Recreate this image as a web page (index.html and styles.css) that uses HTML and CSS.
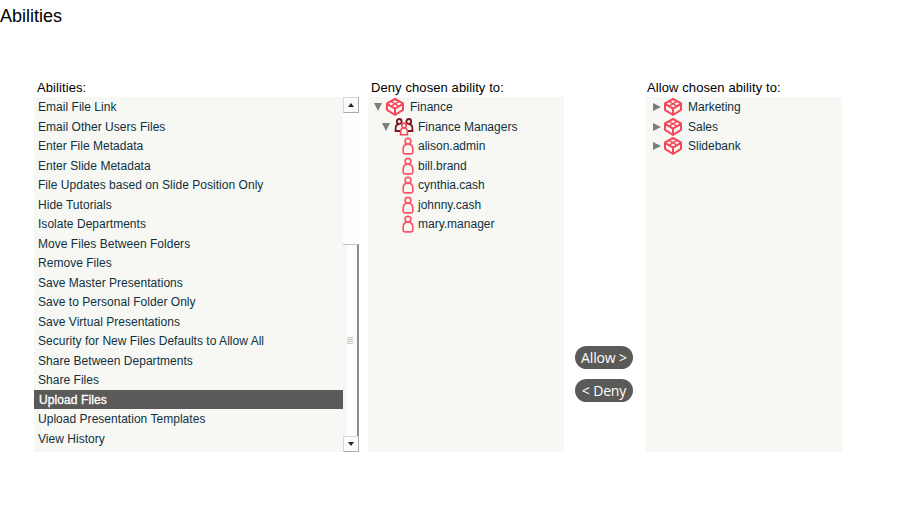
FILE: index.html
```html
<!DOCTYPE html>
<html lang="en">
<head>
  <meta charset="UTF-8">
  <title>Abilities</title>
  <link rel="stylesheet" href="styles.css">
</head>
<body>
  <svg class="defs" width="0" height="0">
    <symbol id="i-org" viewBox="0 0 18 18">
      <path d="M9 1 17 5.4V11.8L9 17 1 11.8V5.4Z M1 5.8 9 10.6 17 5.8 M9 10.6V17" fill="none" stroke="currentColor" stroke-width="2" stroke-linejoin="round"/>
      <path d="M5.4 3.6 12.4 7.9 M12.6 3.6 5.6 7.9" fill="none" stroke="currentColor" stroke-width="1.5"/>
    </symbol>
    <symbol id="i-user" viewBox="0 0 12 18">
      <circle cx="6" cy="4.2" r="2.9" fill="none" stroke="currentColor" stroke-width="1.7"/>
      <path d="M6 7.2C2.6 7.2 1.2 9.4 1.2 12V15.2Q1.2 16.8 2.8 16.8H9.2Q10.8 16.8 10.8 15.2V12C10.8 9.4 9.4 7.2 6 7.2Z" fill="none" stroke="currentColor" stroke-width="1.7"/>
    </symbol>
    <symbol id="i-group" viewBox="0 0 20 18">
      <g fill="none" stroke="#7d1420" stroke-width="1.8">
        <circle cx="5.2" cy="3.4" r="2.4"/>
        <circle cx="14.8" cy="3.4" r="2.4"/>
        <path d="M5.2 6.2C2.6 6.2 1.6 8.2 1.6 10.6V13H6M14.8 6.2C17.4 6.2 18.4 8.2 18.4 10.6V13H14"/>
      </g>
      <g fill="#f7f8f3" stroke="#f4485a" stroke-width="1.6">
        <circle cx="10" cy="7.4" r="2.3"/>
        <path d="M10 10C7.6 10 6.6 11.8 6.6 14V16.8H13.4V14C13.4 11.8 12.4 10 10 10Z"/>
      </g>
    </symbol>
  </svg>

  <h1 class="page-title">Abilities</h1>

  <div class="panels">
    <div class="panel panel-list">
      <div class="panel-label">Abilities:</div>
      <div class="list-box">
        <ul class="ability-list">
          <li>Email File Link</li>
          <li>Email Other Users Files</li>
          <li>Enter File Metadata</li>
          <li>Enter Slide Metadata</li>
          <li>File Updates based on Slide Position Only</li>
          <li>Hide Tutorials</li>
          <li>Isolate Departments</li>
          <li>Move Files Between Folders</li>
          <li>Remove Files</li>
          <li>Save Master Presentations</li>
          <li>Save to Personal Folder Only</li>
          <li>Save Virtual Presentations</li>
          <li>Security for New Files Defaults to Allow All</li>
          <li>Share Between Departments</li>
          <li>Share Files</li>
          <li class="selected">Upload Files</li>
          <li>Upload Presentation Templates</li>
          <li>View History</li>
        </ul>
        <div class="scrollbar">
          <div class="scroll-btn"><span class="arrow-up"></span></div>
          <div class="scroll-track">
            <div class="scroll-thumb"><span class="grip"></span></div>
          </div>
          <div class="scroll-btn"><span class="arrow-down"></span></div>
        </div>
      </div>
    </div>

    <div class="panel panel-tree">
      <div class="panel-label">Deny chosen ability to:</div>
      <ul class="tree">
        <li class="level-0"><span class="tw-open"></span><svg class="ico-org"><use href="#i-org"/></svg>Finance</li>
        <li class="level-1"><span class="tw-open"></span><svg class="ico-group"><use href="#i-group"/></svg>Finance Managers</li>
        <li class="level-2"><svg class="ico-user"><use href="#i-user"/></svg>alison.admin</li>
        <li class="level-2"><svg class="ico-user"><use href="#i-user"/></svg>bill.brand</li>
        <li class="level-2"><svg class="ico-user"><use href="#i-user"/></svg>cynthia.cash</li>
        <li class="level-2"><svg class="ico-user"><use href="#i-user"/></svg>johnny.cash</li>
        <li class="level-2"><svg class="ico-user"><use href="#i-user"/></svg>mary.manager</li>
      </ul>
    </div>

    <div class="actions">
      <button class="pill">Allow &gt;</button>
      <button class="pill">&lt; Deny</button>
    </div>

    <div class="panel panel-tree panel-allow">
      <div class="panel-label">Allow chosen ability to:</div>
      <ul class="tree">
        <li class="level-0"><span class="tw-closed"></span><svg class="ico-org"><use href="#i-org"/></svg>Marketing</li>
        <li class="level-0"><span class="tw-closed"></span><svg class="ico-org"><use href="#i-org"/></svg>Sales</li>
        <li class="level-0"><span class="tw-closed"></span><svg class="ico-org"><use href="#i-org"/></svg>Slidebank</li>
      </ul>
    </div>
  </div>
</body>
</html>
```

FILE: styles.css
```css
body {
  margin: 0;
  background-color: #fff;
  color: #000;
  font-family: "Liberation Sans", Arial, sans-serif;
}
.defs {
  display: block;
  height: 0;
}
.page-title {
  margin: 0;
  height: 32px;
  font-size: 18px;
  font-weight: normal;
  line-height: 32px;
}
.panels {
  display: flex;
  margin-top: 47px;
  padding-left: 34px;
}
.panel-label {
  height: 18px;
  padding-left: 3px;
  font-size: 13px;
  letter-spacing: 0.09px;
  line-height: 18px;
}
.panel-allow .panel-label {
  padding-left: 1px;
}
.panel-list {
  width: 325px;
  margin-right: 9px;
}
.panel-tree {
  width: 196px;
}
.list-box {
  display: flex;
  height: 355px;
  background-color: #f7f8f3;
}
.ability-list {
  flex: 1;
  margin: 0;
  padding: 0;
  list-style: none;
}
.ability-list li {
  box-sizing: border-box;
  height: 19.5px;
  padding-top: 1px;
  padding-left: 4px;
  color: #0f3040;
  font-size: 12px;
  letter-spacing: 0.03px;
  line-height: 19px;
}
.ability-list li.selected {
  padding-left: 5px;
  background-color: #5a5a58;
  color: #fff;
  letter-spacing: 0.1px;
  -webkit-text-stroke: 0.35px #fff;
}
.scrollbar {
  display: flex;
  flex-direction: column;
  width: 16px;
  background-color: #fff;
}
.scroll-btn {
  display: flex;
  align-items: center;
  justify-content: center;
  height: 16px;
  border: 1px solid #d8d8d8;
  border-right-color: #a8a8a8;
  border-bottom-color: #a8a8a8;
  box-sizing: border-box;
  background-color: #fafafa;
}
.arrow-up {
  border-left: 3.5px solid transparent;
  border-right: 3.5px solid transparent;
  border-bottom: 4px solid #222;
}
.arrow-down {
  border-left: 3.5px solid transparent;
  border-right: 3.5px solid transparent;
  border-top: 4px solid #222;
}
.scroll-track {
  display: flex;
  flex: 1;
  flex-direction: column;
  justify-content: flex-end;
  background-color: #fdfdfd;
}
.scroll-thumb {
  display: flex;
  align-items: center;
  justify-content: center;
  height: 192px;
  border-top: 1px solid #c4c4c4;
  border-right: 2px solid #8c8c8c;
  box-sizing: border-box;
  background: linear-gradient(to right, #f2f2f2, #fff 40%, #f8f8f8);
}
.grip {
  width: 6px;
  height: 7px;
  background: repeating-linear-gradient(to bottom, #c9cfcb 0, #c9cfcb 1px, #eef0ee 1px, #eef0ee 2px);
}
.tree {
  box-sizing: border-box;
  height: 355px;
  margin: 0;
  padding: 0.5px 0 0;
  background-color: #f7f8f3;
  list-style: none;
}
.tree li {
  display: flex;
  align-items: center;
  height: 19.5px;
  color: #0f3040;
  font-size: 12px;
}
.tree .level-0 {
  padding-left: 6px;
}
.tree .level-1 {
  padding-left: 14px;
}
.tree .level-2 {
  padding-left: 34px;
}
.tw-open {
  margin-right: 4px;
  border-left: 4.5px solid transparent;
  border-right: 4.5px solid transparent;
  border-top: 8px solid #7b7f7b;
}
.tw-closed {
  margin-right: 3px;
  margin-left: 1px;
  border-top: 4.5px solid transparent;
  border-bottom: 4.5px solid transparent;
  border-left: 8px solid #7b7f7b;
}
.ico-org {
  width: 18px;
  height: 18px;
  margin-right: 6px;
  color: #f6475a;
}
.ico-group {
  width: 20px;
  height: 18px;
  margin-right: 4px;
}
.ico-user {
  width: 12px;
  height: 18px;
  margin-right: 4px;
  color: #f9566a;
}
.actions {
  display: flex;
  flex-direction: column;
  justify-content: flex-end;
  gap: 10px;
  width: 58px;
  margin: 0 13px 50px 11px;
}
.pill {
  width: 58px;
  height: 23px;
  padding: 0;
  border: none;
  border-radius: 12px;
  background-color: #5a5a58;
  color: #fff;
  font-family: "Open Sans", sans-serif;
  font-size: 14px;
  letter-spacing: -0.15px;
  line-height: 23px;
  cursor: pointer;
}
.pill:hover {
  background-color: #444;
}
```
